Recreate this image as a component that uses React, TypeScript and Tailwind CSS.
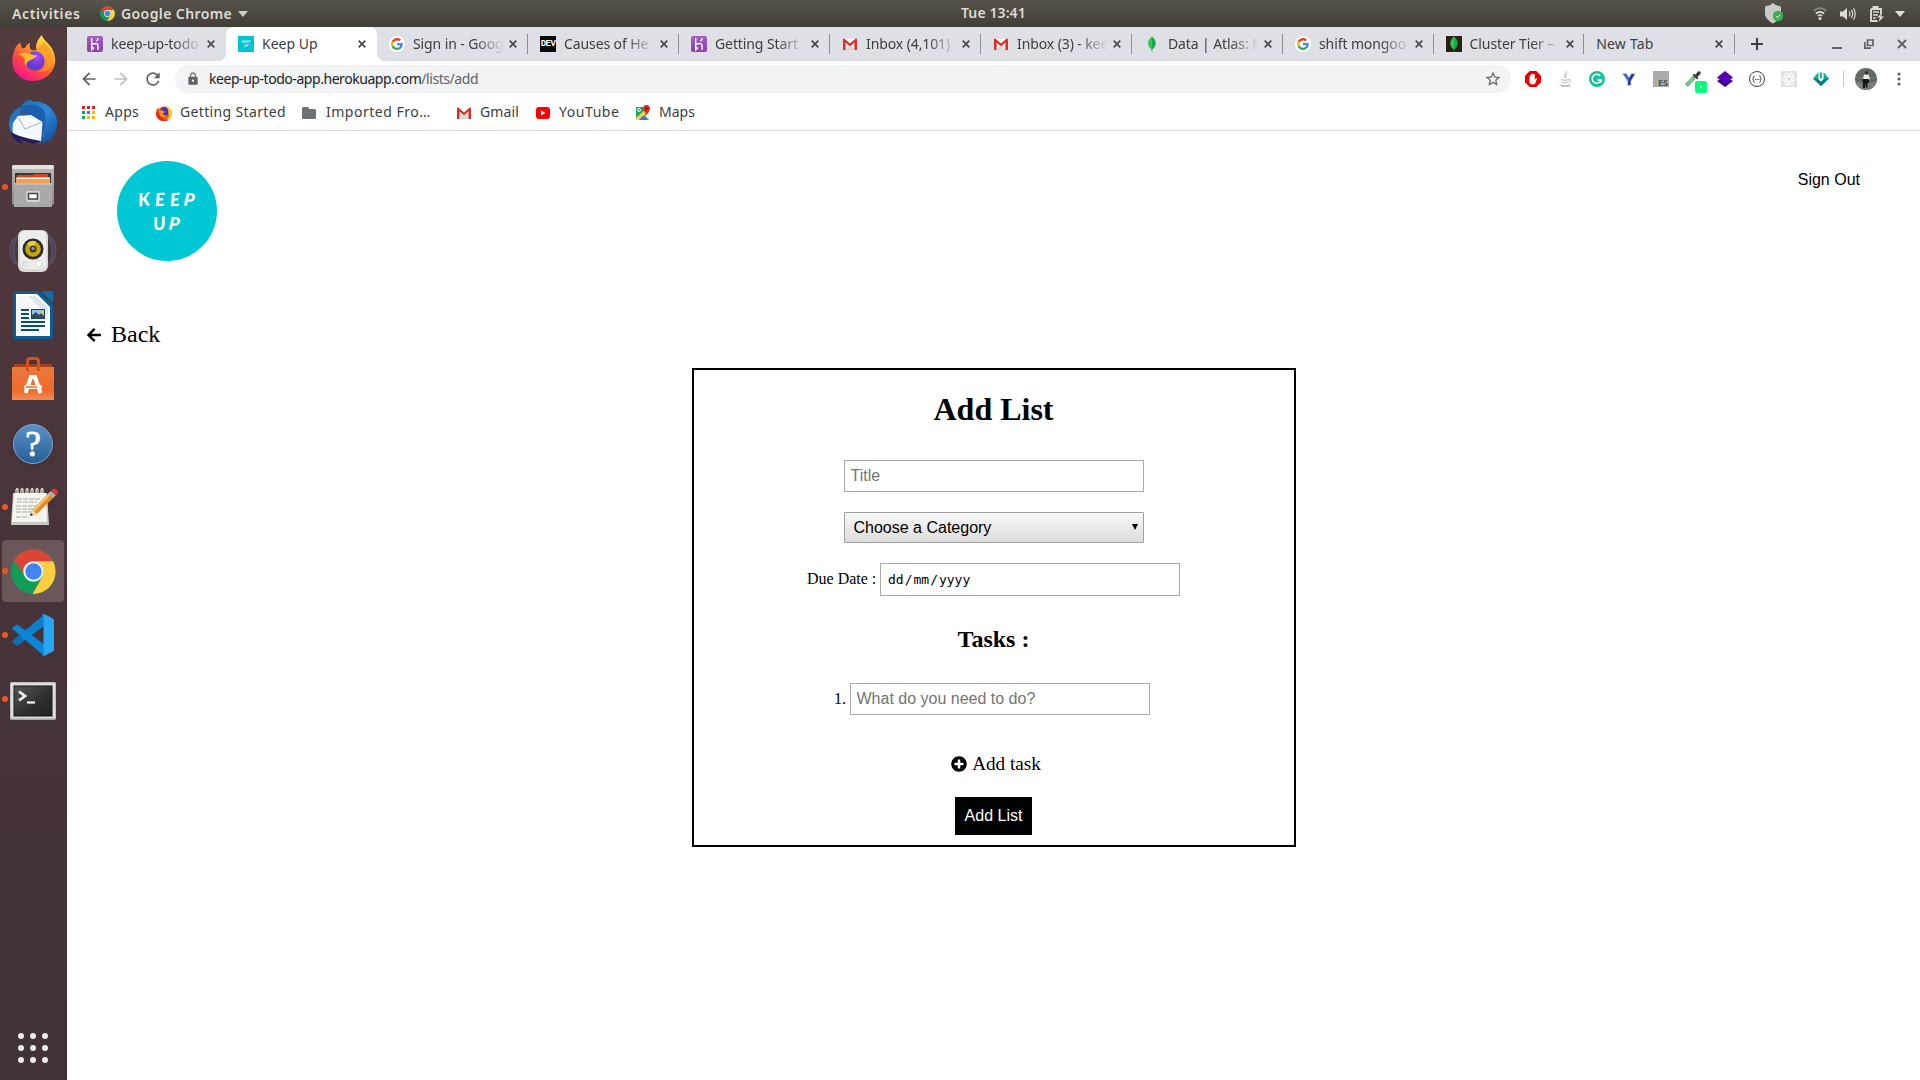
import React from "react";
import { FaArrowLeft, FaPlusCircle } from "react-icons/fa";
import { MdArrowBack, MdArrowForward, MdRefresh, MdLock, MdStarBorder } from "react-icons/md";

type P = { className?: string };

const Firefox = ({ className }: P) => (
  <svg viewBox="0 0 48 48" className={className}>
    <defs>
      <linearGradient id="ffBody" x1="0.85" y1="0.05" x2="0.25" y2="0.95">
        <stop offset="0" stopColor="#fff44f" />
        <stop offset="0.3" stopColor="#ffb02e" />
        <stop offset="0.62" stopColor="#ff5634" />
        <stop offset="1" stopColor="#f5148c" />
      </linearGradient>
      <radialGradient id="ffGlobe" cx="0.6" cy="0.3" r="0.8">
        <stop offset="0" stopColor="#a24cff" />
        <stop offset="0.6" stopColor="#6a3ad9" />
        <stop offset="1" stopColor="#3b4bc8" />
      </radialGradient>
    </defs>
    <path fill="url(#ffBody)" d="M3 18C4 13 7 9 10 8c0 3 1 5 2 6l3-1c1-3 3-4 5-5-1 3-1 6 2 8h5c-2-3-1-9 5-16 2 6 9 9 12 17 3 7 3 14-1 20-4 7-12 11-20 11C12 48 3 41 1.500 30 1 26 1.500 22 3 18z" />
    <circle cx="25" cy="27" r="10" fill="url(#ffGlobe)" />
    <path fill="#ffbd2e" d="M8 20c3-2 9-2 13 0 2 1 4 1 6 1-1 3-4 4-7 5-3 1-4 3-4 6-3-3-1-6-2-8-1-2-4-3-6-4z" />
    <path fill="#ff9a28" d="M28 15c6 0 10 5 10 11 0 6-5 11-11 12 9 2 17-5 17-14 0-8-6-13-10-17-2 3-4 6-6 8z" opacity="0.75" />
  </svg>
);

const FirefoxClassic = ({ className }: P) => (
  <svg viewBox="0 0 16 16" className={className}>
    <path fill="#f4601a" d="M1.500 2.500L3 4q1.500-2.500 5-2.500C12 1 16 4 16 8.500 16 13 12.500 16 8 16S0 13 0 8.500q0-3.500 1.500-6z" />
    <path fill="#e8260c" d="M0 8q0 5 4 7.200Q8 17 12 15q-4 0-6-2.500Q3 9 3.500 5z" />
    <path fill="#ffd21f" d="M10 .800q6 2.500 6 8 0 5-5 6.700 2.500-3 2-6.500-.5-4-3-8.200z" />
    <circle cx="8" cy="6.800" r="4.200" fill="#2b3fa8" />
    <path fill="#4b2fc0" d="M6 3q4-2 6 2v5q-3 2-5 0z" />
    <path fill="#f9921e" d="M3 5.500q2-1 4 .5l2 .5q-.5 1.500-2.500 2 .5 2 3.500 1.500-2 3-5.500 1.200Q2.500 9 3 5.500z" />
  </svg>
);

const Thunderbird = () => (
  <svg viewBox="0 0 48 48" className="size-12">
    <defs>
      <linearGradient id="tb" x1="0" y1="0" x2="1" y2="1">
        <stop offset="0" stopColor="#1d5fa8" />
        <stop offset="0.5" stopColor="#2a8ddb" />
        <stop offset="1" stopColor="#123f91" />
      </linearGradient>
    </defs>
    <path fill="#231d5e" d="M2 33c1 6 5 10 12 12l-4-5 14 5 8-3-8-9z" />
    <path fill="url(#tb)" d="M0 26C0 17 4 10 12 8c2-4 5-7 10-7l1 1.500c12-1 22 6 25 18 1 10-3 18-9 23l1-4-6 6 1-4.500-5 5 1.500-5L14 24 3 34C1 31 0 29 0 26z" />
    <path fill="#1b5fae" d="M12 8c9-4 18-3 23 4 3 6 1 16-1 22-1-6-3-11-7-13l-16-5z" />
    <path fill="#f7f8fa" d="M4 24l5-7 13-1 11.500 7L32 42C22 40 11 38 4 34q-1-5 0-10z" />
    <path fill="none" stroke="#b9bdc5" strokeWidth="1.200" d="M9 18l7 12 17-7" />
    <circle cx="14.500" cy="13.500" r="1.800" fill="#6b4b2a" />
  </svg>
);

const Files = () => (
  <svg viewBox="0 0 44 46" className="h-[46px] w-11">
    <defs>
      <linearGradient id="cab" x1="0" y1="0" x2="0" y2="1">
        <stop offset="0" stopColor="#b9b9b8" />
        <stop offset="1" stopColor="#8a8a89" />
      </linearGradient>
    </defs>
    <rect x="1" y="1" width="42" height="40" rx="2" fill="url(#cab)" />
    <rect x="1" y="1" width="42" height="4" rx="2" fill="#e3e3e2" />
    <rect x="4" y="9" width="36" height="11" fill="#3c3635" />
    <path fill="#d2491b" d="M6 11h16l1-1h14v10H6z" />
    <path fill="#f5a04c" d="M5 13h34v7H5z" />
    <path stroke="#fff" d="M6 14.500h32" />
    <path fill="#a9a9a8" d="M3 19h38v24H3z" />
    <path fill="#bdbdbc" d="M3 19h38v2H3z" />
    <rect x="15" y="27" width="14" height="11" rx="2" fill="#d4d4d3" />
    <rect x="17.500" y="29.500" width="9" height="5.500" fill="#fff" stroke="#424242" strokeWidth="1.500" />
  </svg>
);

const Rhythmbox = () => (
  <svg viewBox="0 0 48 46" className="h-[46px] w-12">
    <path d="M6 9c-6 8-6 19 0 27M42 9c6 8 6 19 0 27M9 7C3 18 3 28 9 38M39 7c6 11 6 21 0 31" fill="none" stroke="#5e76a6" strokeWidth="1.800" opacity="0.4" />
    <rect x="9" y="2" width="30" height="42" rx="6" fill="#d9d9d7" />
    <rect x="11" y="3" width="26" height="38" rx="5" fill="#ededec" />
    <circle cx="24" cy="21" r="10.500" fill="#2d2b2b" />
    <circle cx="24" cy="21" r="7.800" fill="#c8a40e" />
    <path d="M24 21L18 15.500a8 8 0 0 1 9-2z" fill="#ecd23c" />
    <circle cx="24" cy="21" r="3.500" fill="#3d3c3a" />
    <circle cx="24" cy="20.500" r="1.600" fill="#9a9a98" />
    <circle cx="30" cy="36" r="3.500" fill="#fff" stroke="#cfcfcd" />
    <rect x="14" y="34" width="4" height="4" fill="none" stroke="#d6d6d4" />
  </svg>
);

const Writer = () => (
  <svg viewBox="0 0 40 48" className="h-12 w-10">
    <path fill="#0c5d94" d="M2 0h24l14 14v32a2 2 0 0 1-2 2H2a2 2 0 0 1-2-2V2a2 2 0 0 1 2-2z" />
    <path fill="#0e6ba8" d="M28 0h12v12z" />
    <path fill="#fff" d="M3 3h21l13 13v29H3z" />
    <path fill="#dfe5e9" d="M5 5h18l12 12v26H5z" />
    <path fill="#f5f7f8" d="M5 43V5h10l20 20v18z" />
    <path stroke="#0c4c78" strokeWidth="2" d="M8 19h8M8 23h8M8 27h8M8 31h24M8 35h24M8 39h18" />
    <rect x="18.500" y="18.500" width="13" height="9" fill="#8fc7ea" stroke="#0c4c78" />
    <path fill="#3b4a52" d="M19 27v-3l4-3 3 3 2-2 3 3v2z" />
    <circle cx="29" cy="21" r="1.500" fill="#f0c23b" />
  </svg>
);

const Software = () => (
  <svg viewBox="0 0 42 44" className="h-11 w-[42px]">
    <defs>
      <linearGradient id="bag" x1="0" y1="0" x2="0" y2="1">
        <stop offset="0" stopColor="#e97a3c" />
        <stop offset="0.7" stopColor="#ee6a2c" />
        <stop offset="1" stopColor="#f38a52" />
      </linearGradient>
    </defs>
    <path fill="#a6401c" d="M2 7h38v5H2z" />
    <path fill="url(#bag)" d="M0 10h42v33H0z" />
    <path fill="none" stroke="#d4521d" strokeWidth="3" d="M15.500 14V4.500c0-1.500 1-3 3-3h5c2 0 3 1.500 3 3V14" />
    <path fill="none" stroke="#fff" strokeWidth="4" d="M13.500 36l5.500-16h4l5.500 16" />
    <rect x="12" y="28" width="18" height="4" rx="2" fill="#fff" />
    <rect x="14" y="29.300" width="11" height="1.500" fill="#ee6a2c" />
  </svg>
);

const Help = () => (
  <div className="mt-0.5 flex size-10 items-center justify-center rounded-full border border-[#7fa6cc] bg-linear-to-b from-[#5b91c9] to-[#265f95] font-['Liberation_Serif',serif] text-[35px] leading-none text-white shadow [-webkit-text-stroke:0.8px_white]">?</div>
);

const Gedit = () => (
  <svg viewBox="0 0 48 40" className="ml-0.5 h-10 w-12">
    <path fill="#c9c9c4" d="M3 6h34l2 32H1z" />
    <path fill="#f4f4f0" d="M4 6h32l1 29H2z" />
    <path d="M7 12h24M7 15h20M6 19h25M6 22h17M6 25h22M6 30h13" stroke="#a8a8a4" strokeDasharray="5 1" />
    <path d="M6 6V3q1.500-3 2 0v3M11 6V3q1.500-3 2 0v3M16 6V3q1.500-3 2 0v3M21 6V3q1.500-3 2 0v3M26 6V3q1.500-3 2 0v3M31 6V3q1.500-3 2 0v3" fill="none" stroke="#dededa" strokeWidth="1.300" />
    <path fill="#e8892c" d="M20 29l2-6L40 5l5 4-18 18z" />
    <path fill="#f8c16a" d="M22 23L40 5l2 1.500L24 25z" />
    <path fill="#f0d9b5" d="M20 29l2-6 5 4z" />
    <path fill="#222" d="M20 29l1-3 2 2z" />
    <path fill="#a9b1b5" d="M38 7l3-3 5 4-3 3z" />
    <path fill="#e0353b" d="M41 4c2-3 4-2.500 6-1s1 4-1 5z" />
  </svg>
);

const Chrome = ({ className }: P) => (
  <svg viewBox="0 0 48 48" className={className}>
    <circle cx="24" cy="24" r="24" fill="#0f9d58" />
    <path fill="#db4437" d="M3.200 12A24 24 0 0 1 44.800 13H24a11 11 0 0 0-10.500 14z" />
    <path fill="#ffcd40" d="M44.800 13A24 24 0 0 1 23 48l10.500-18.500A11 11 0 0 0 24 13z" />
    <circle cx="24" cy="24" r="11" fill="#f1f1f1" />
    <circle cx="24" cy="24" r="8.700" fill="#4285f4" />
  </svg>
);

const VSCode = () => (
  <svg viewBox="0 0 42 42" className="size-[42px]">
    <path fill="#0a7fd0" d="M0 27.500L4 31q1 .8 2.500-.2L32 12V.500z" />
    <path fill="#0b6fb5" d="M0 27.500L4 31q1 .8 2.500-.2L12 26.500 7 21z" />
    <path fill="#0a86d8" d="M0 14.500L4 11q1-.8 2.500.2L33 31l-2 10z" />
    <path fill="#2aa5f2" d="M30 .500Q31.500-.5 33 .500l8 4q1 .5 1 2v29q0 1.500-1 2l-8 4q-1.500.8-3-.5 1.500.5 1.500-2V3q0-2.500-1.500-2.500z" />
  </svg>
);

const Terminal = () => (
  <svg viewBox="0 0 46 38" className="mt-1 h-[38px] w-[46px]">
    <defs>
      <linearGradient id="term" x1="0" y1="0" x2="1" y2="1">
        <stop offset="0" stopColor="#555" />
        <stop offset="0.6" stopColor="#2d2d2d" />
        <stop offset="1" stopColor="#222" />
      </linearGradient>
    </defs>
    <rect width="46" height="38" rx="1.500" fill="#a4a4a2" />
    <rect x="0.500" y="0.500" width="45" height="36" rx="1" fill="#dcdcda" />
    <rect x="3.500" y="3.500" width="39" height="31" fill="#161616" />
    <rect x="4.500" y="4.500" width="37" height="29" fill="url(#term)" />
    <path d="M9 9.500l6 4.500-6 4.500" fill="none" stroke="#f4f4f4" strokeWidth="2.800" />
    <path d="M17 20.500h8" stroke="#f4f4f4" strokeWidth="2.200" />
  </svg>
);

const Launcher = () => {
  const apps: { el: React.ReactNode; run?: boolean; active?: boolean }[] = [
    { el: <Firefox className="mb-0.5 ml-px size-[46px]" /> },
    { el: <Thunderbird /> },
    { el: <Files />, run: true },
    { el: <Rhythmbox /> },
    { el: <Writer /> },
    { el: <Software /> },
    { el: <Help /> },
    { el: <Gedit />, run: true },
    { el: <Chrome className="size-[45px]" />, run: true, active: true },
    { el: <VSCode />, run: true },
    { el: <Terminal />, run: true },
  ];
  return (
    <aside className="flex w-[67px] shrink-0 flex-col bg-linear-to-b from-[#523a3d] via-[#47333a] to-[#3f3336]">
      {apps.map((a, i) => (
        <div key={i} className="flex h-16 items-center">
          <div className={a.active ? "ml-0.5 flex h-[62px] w-[62px] items-center rounded-[4px] bg-[#6b5659]" : "ml-0.5 flex h-[62px] w-[62px] items-center"}>
            <span className={a.run ? "size-1.5 shrink-0 rounded-full bg-[#e95420]" : "size-1.5 shrink-0"} />
            <span className="flex w-[50px] items-center justify-center [&>svg]:shrink-0">{a.el}</span>
          </div>
        </div>
      ))}
      <div className="mt-auto mb-[17px] ml-[18px] grid w-[30px] grid-cols-3 gap-1.5">
        {Array.from({ length: 9 }, (_, i) => (
          <span key={i} className="size-1.5 rounded-full bg-[#ececea]" />
        ))}
      </div>
    </aside>
  );
};

const TopBar = () => (
  <header className="flex h-[27px] shrink-0 items-center bg-linear-to-b from-[#57534a] to-[#403e38] font-['Noto_Sans',sans-serif] text-[14px] leading-none font-semibold text-[#dfdbd2]">
    <span className="ml-3 w-[68px] tracking-[0.6px] whitespace-nowrap">Activities</span>
    <Chrome className="ml-5 size-[15px]" />
    <span className="ml-1.5 w-[111px] tracking-[0.4px] whitespace-nowrap">Google Chrome</span>
    <svg viewBox="0 0 10 6" className="ml-1.5 h-1.5 w-2.5"><path d="M0 0h10L5 6z" fill="#cfccc4" /></svg>
    <span className="mb-0.5 ml-[713px] w-[68px] tracking-[0.1px] whitespace-nowrap">Tue 13:41</span>
    <div className="ml-auto flex h-full items-center pr-[15px]">
      <svg viewBox="0 0 18 21" className="mr-[30px] h-[21px] w-[18px]">
        <path fill="#c9cbca" d="M8 0q3 3 8 3.500v7c0 4-4 8-8 10-4-2-8-6-8-10v-7Q5 3 8 0z" />
        <circle cx="13" cy="13" r="5.200" fill="#35b34a" />
        <path d="M10.800 13l1.700 1.700 2.800-3" fill="none" stroke="#fff" />
      </svg>
      <svg viewBox="0 0 14 13" className="mr-[13px] h-[13px] w-3.5">
        <path d="M.8 3.800Q7-1.500 13.200 3.800" fill="none" stroke="#8b887f" strokeWidth="1.800" />
        <path d="M2.800 6.600Q7 3 11.200 6.600" fill="none" stroke="#dfdbd2" strokeWidth="1.700" />
        <path d="M4.800 9Q7 7 9.200 9" fill="none" stroke="#dfdbd2" strokeWidth="1.500" />
        <circle cx="7" cy="11.500" r="1.500" fill="#dfdbd2" />
      </svg>
      <svg viewBox="0 0 16 14" className="mr-3.5 h-3.5 w-4">
        <path fill="#dfdbd2" d="M0 4.500h3L7 1v12L3 9.500H0z" />
        <path d="M9 4.500q1.800 2.500 0 5M11.300 2.800q2.800 4.200 0 8.400M13.500 1.200q3.500 5.800 0 11.600" fill="none" stroke="#dfdbd2" strokeWidth="1.200" />
      </svg>
      <svg viewBox="0 0 14 16" className="mr-[11px] h-4 w-3.5">
        <path d="M3.500 3V1h4v2M1 3h10v5M7.500 15H1V3" fill="none" stroke="#dfdbd2" strokeWidth="1.900" />
        <path d="M3 6h6M3 9h5M3 12h3" stroke="#dfdbd2" strokeWidth="1.600" />
        <path fill="#dfdbd2" d="M12 7l-5 4.500h3l-1.500 4.500L14 10.500h-3z" />
      </svg>
      <svg viewBox="0 0 10 6" className="h-1.5 w-2.5"><path d="M0 0h10L5 6z" fill="#dfdbd2" /></svg>
    </div>
  </header>
);

const Heroku = () => (
  <span className="flex size-4 items-center justify-center rounded-[2px] bg-linear-to-b from-[#a45fc4] to-[#8a3fae] text-white">
    <svg viewBox="0 0 16 16" className="size-4"><path d="M4.700 2v6.700q6.300-2.700 6.300 1V14M11 2q0 2-1.500 3.300M4.700 10.500V14l1.800-1.700z" fill="none" stroke="#fff" strokeWidth="1.400" /></svg>
  </span>
);
const Google = () => (
  <span className="flex size-4 items-center justify-center rounded-full bg-white">
    <svg viewBox="0 0 48 48" className="size-3">
      <path fill="#ea4335" d="M24 9.500c3.500 0 6.700 1.200 9.200 3.600l6.900-6.900C35.900 2.400 30.500 0 24 0 14.600 0 6.500 5.400 2.600 13.200l8 6.200C12.400 13.700 17.700 9.500 24 9.500z" />
      <path fill="#4285f4" d="M47 24.500c0-1.600-.2-3.100-.4-4.500H24v9h12.900c-.6 3-2.300 5.500-4.800 7.200l7.700 6C44.400 38 47 31.800 47 24.500z" />
      <path fill="#fbbc05" d="M10.500 28.600A14.500 14.500 0 0 1 10.500 19.400l-8-6.200a24 24 0 0 0 0 21.600z" />
      <path fill="#34a853" d="M24 48c6.500 0 11.900-2.100 15.900-5.800l-7.700-6c-2.200 1.500-4.900 2.300-8.200 2.300-6.300 0-11.600-4.200-13.500-9.900l-8 6.200C6.500 42.600 14.600 48 24 48z" />
    </svg>
  </span>
);
const GmailM = () => (
  <svg viewBox="0 0 16 16" className="size-4">
    <path fill="#e9e9e9" d="M1 3h14v11H1z" />
    <path fill="#fff" d="M3 3h10L8 8z" />
    <path fill="#c9c9c9" d="M3 14l5-5 5 5z" opacity=".5" />
    <path fill="#d93025" d="M1 14V3.500Q1 2.300 2.200 2.500L8 7.500l5.800-5q1.200-.2 1.200 1V14h-2.500V6.500L8 10.200 3.500 6.500V14z" />
  </svg>
);
const Leaf = () => (
  <svg viewBox="0 0 16 16" className="size-4"><path fill="#13aa52" d="M8 .5c5 4.500 5 9 .3 13V16h-.6v-2.500C3 9.500 3 5 8 .500z" /><path fill="#3fc43a" d="M8 .5v13C4 9.500 3.500 5 8 .500z" /></svg>
);

const Favicon = ({ kind }: { kind: string }) => {
  if (kind === "heroku") return <Heroku />;
  if (kind === "google") return <Google />;
  if (kind === "gmail") return <GmailM />;
  if (kind === "leaf") return <Leaf />;
  if (kind === "keep")
    return (
      <span className="flex size-4 flex-col items-center justify-center bg-[#00c4d4] font-['Lato',sans-serif] text-[3.500px] leading-1 text-white">
        <span>KEEP</span>
        <span>UP</span>
      </span>
    );
  if (kind === "dev")
    return (
      <span className="flex size-4 items-center justify-center bg-[#0a0a0a] font-['Liberation_Mono',monospace] text-[9px] leading-none font-bold tracking-[-0.5px] text-white">DEV</span>
    );
  return (
    <span className="flex size-4 bg-[#2e1f15]"><Leaf /></span>
  );
};

const Close = ({ className }: P) => (
  <svg viewBox="0 0 8 8" className={className}><path d="M.7.7l6.600 6.600M7.300.7L.7 7.300" stroke="#45484c" strokeWidth="1.700" /></svg>
);

const tabs = [
  { icon: "heroku", title: "keep-up-todo" },
  { icon: "keep", title: "Keep Up" },
  { icon: "google", title: "Sign in - Goog" },
  { icon: "dev", title: "Causes of He" },
  { icon: "heroku", title: "Getting Start" },
  { icon: "gmail", title: "Inbox (4,101)" },
  { icon: "gmail", title: "Inbox (3) - kee" },
  { icon: "leaf", title: "Data | Atlas: M" },
  { icon: "google", title: "shift mongoo" },
  { icon: "mongo", title: "Cluster Tier –" },
  { icon: "", title: "New Tab" },
];

const TabStrip = () => (
  <div className="flex h-[34px] shrink-0 items-center bg-[#dee0e6] pl-2 font-['Noto_Sans',sans-serif] text-[14px] text-[#3c4043]">
    {tabs.map((t, i) => {
      const active = i === 1;
      return (
        <div
          key={i}
          className={
            active
              ? "relative flex h-full w-[151px] shrink-0 items-center rounded-t-[8px] bg-white pl-3 before:absolute before:bottom-0 before:-left-2 before:size-2 before:bg-[radial-gradient(circle_at_0_0,transparent_8px,white_8.5px)] after:absolute after:-right-2 after:bottom-0 after:size-2 after:bg-[radial-gradient(circle_at_100%_0,transparent_8px,white_8.5px)]"
              : i > 7
                ? "flex h-full w-[150.6px] shrink-0 items-center pl-3"
                : "flex h-full w-[151px] shrink-0 items-center pl-3"
          }
        >
          {t.icon && <span className="mr-2 shrink-0"><Favicon kind={t.icon} /></span>}
          <span
            className={
              t.icon && !active
                ? "mr-[-4px] w-[92px] shrink-0 leading-5 tracking-[-0.1px] whitespace-nowrap [mask-image:linear-gradient(to_right,black_62px,transparent_91px)]"
                : active
                  ? "w-[88px] shrink-0 leading-5 whitespace-nowrap"
                  : "w-[111px] shrink-0 leading-5 tracking-[0.2px] whitespace-nowrap"
            }
          >
            {t.title}
          </span>
          <Close className="ml-2 size-2 shrink-0" />
          <span className={i > 1 ? "ml-auto h-5 w-px bg-[#8b8e93]" : "hidden"} />
        </div>
      );
    })}
    <svg viewBox="0 0 12 12" className="ml-4 size-3"><path d="M6 0v12M0 6h12" stroke="#3c4043" strokeWidth="2" /></svg>
    <div className="ml-auto flex items-center pr-[13px]">
      <svg viewBox="0 0 10 10" className="mr-[22px] size-2.5"><path d="M0 9h10" stroke="#5f6368" strokeWidth="2" /></svg>
      <svg viewBox="0 0 10 10" className="mr-[23px] size-2.5"><path d="M3.500 1H9v5.500H3.500zM.8 3v6.200H7" fill="none" stroke="#5f6368" strokeWidth="1.700" /></svg>
      <svg viewBox="0 0 10 10" className="size-2.5"><path d="M1 1l8 8M9 1L1 9" stroke="#5f6368" strokeWidth="1.900" /></svg>
    </div>
  </div>
);

const extensions: React.ReactNode[] = [
  <svg viewBox="0 0 16 16" className="size-4"><path fill="#e60000" d="M4.700 0h6.600L16 4.700v6.600L11.300 16H4.700L0 11.300V4.700z" /><path fill="#fff" d="M4.500 8V5q.7-.8 1.300 0v2.500V3.500q.7-.8 1.300 0V7 3q.8-.8 1.400 0v4-3.500q.7-.7 1.300 0V9l1-1.500q1-.5 1.200.3L10.500 12q-1 1.500-3 1.500-3 0-3-3z" /></svg>,
  <svg viewBox="0 0 16 16" className="size-4" fill="none" stroke="#b5b5b5"><path d="M8.500 0c2 2.500-3 3.500-.5 7M10.500 3c-3 1.500-1.500 2.500-1.200 4M4 8.500c2 1 6 1 7.500 0M4.500 11c2 1 5 1 6.500 0M12 8.500c2-.5 2 2-.5 2.800M2.500 13.500c3 1.800 8 1.600 10.500 0M4 15.300c3 .7 7 .5 9.500-.3" /></svg>,
  <svg viewBox="0 0 16 16" className="size-4"><circle cx="8" cy="8" r="8" fill="#15c39a" /><path d="M11.300 5A4.500 4.500 0 1 0 12 9H8.500M12 9v2.500" fill="none" stroke="#fff" strokeWidth="1.500" /></svg>,
  <svg viewBox="0 0 16 16" className="size-4"><path fill="#1c3a9e" stroke="#dcdcdc" strokeWidth=".8" d="M1.500 2.500h4L8 6.500l2.500-4h4L10 10v4.500H6.500V10z" /><path fill="#4f86f2" d="M3 3.300h2L8 8.500v2z" /></svg>,
  <span className="flex size-4 items-end justify-end bg-[#ababab] pr-px font-['Noto_Sans',sans-serif] text-[9px] leading-[9px] font-bold text-[#555]">ES</span>,
  <span className="relative size-4">
    <svg viewBox="0 0 16 16" className="size-4"><path d="M1.500 14.500L9.500 6" stroke="#777" strokeWidth="3.500" /><path d="M2 14l7-7.500" stroke="#5fe38c" strokeWidth="2" /><path fill="#3b3b3b" d="M7.500 4l1.300-1.300 1.500 1L13 .5q2-.8 2.500.6.500 1.300-.5 2.400L12.500 6l1 1.300-1.300 1.300z" /></svg>
    <span className="absolute top-2.5 left-2.5 flex size-3 items-center justify-center rounded-[2px] bg-[#00ff7b]"><span className="size-0.5 bg-white" /></span>
  </span>,
  <svg viewBox="0 0 16 16" className="size-4"><path fill="#38008a" d="M0 10l8-5 8 5-8 6z" /><path fill="#5a00b4" d="M0 6.500L8 0l8 6.500-8 6z" /></svg>,
  <svg viewBox="0 0 16 16" className="size-4" fill="none" stroke="#444"><circle cx="8" cy="8" r="7.500" /><path d="M5.700 4.800q-1.200 0-1.200 1.500T3.600 8q.9 0 .9 1.700t1.200 1.500M10.300 4.800q1.200 0 1.200 1.500t.9 1.700q-.9 0-.9 1.700t-1.200 1.500M6 8.500h1M7.700 8.500h1M9.300 8.500h1" /></svg>,
  <svg viewBox="0 0 16 16" className="size-4" fill="none" stroke="#fff"><path fill="#e2e2e2" stroke="none" d="M0 0h16v16H0z" /><ellipse cx="8" cy="8" rx="6.500" ry="2.500" /><ellipse cx="8" cy="8" rx="6.500" ry="2.500" transform="rotate(60 8 8)" /><ellipse cx="8" cy="8" rx="6.500" ry="2.500" transform="rotate(120 8 8)" /></svg>,
  <svg viewBox="0 0 16 16" className="size-4"><path fill="#12b48c" d="M0 7.500L5.500 1v7.500L8 10.500l2.500-2V1L16 7.500 8 15z" /><path fill="#0b7f78" d="M0 7.500h4L8 11l4-3.500h4L8 15z" /><path fill="#12b48c" d="M7 2l1-1 1 1v5.500H7z" /></svg>,
];

const Toolbar = () => (
  <div className="flex h-9 shrink-0 items-center bg-white text-[#5f6368]">
    <MdArrowBack className="ml-3 size-5" />
    <MdArrowForward className="ml-3 size-5 text-[#bdc1c6]" />
    <MdRefresh className="ml-3 size-5" />
    <div className="ml-3 flex h-7 w-[1336px] items-center rounded-full bg-[#f1f3f4] font-['Noto_Sans',sans-serif] text-[14px]">
      <MdLock className="ml-[11px] size-3.5" />
      <span className="ml-[9px] leading-5 tracking-[-0.45px] whitespace-nowrap">
        <span className="text-[#202124]">keep-up-todo-app.herokuapp.com</span>/lists/add
      </span>
      <MdStarBorder className="mr-[9px] ml-auto size-[18px]" />
    </div>
    <div className="ml-3.5 flex gap-4">
      {extensions.map((e, i) => (
        <span key={i} className="flex size-4">{e}</span>
      ))}
    </div>
    <span className="ml-3.5 h-4 w-px bg-[#c4c6ca]" />
    <svg viewBox="0 0 22 22" className="ml-[11px] size-[22px]">
      <defs><clipPath id="av"><circle cx="11" cy="11" r="11" /></clipPath></defs>
      <g clipPath="url(#av)">
        <path fill="#5f6a61" d="M0 0h22v22H0z" />
        <path fill="#7a7d79" d="M0 14h22v8H0z" />
        <path fill="#8a8c88" d="M0 9h22v1H0zM0 17h22v1H0z" opacity=".5" />
        <path fill="#e4e6ea" d="M9 6.500h4.500l1.500 5H8z" />
        <circle cx="11.500" cy="4.800" r="1.700" fill="#3a2a22" />
        <path fill="#16161a" d="M7.500 11h6l1 3.500-2 .5v4l-1.500 1v-5l-1 5H8z" />
      </g>
    </svg>
    <svg viewBox="0 0 4 14" className="ml-5 h-3.5 w-1" fill="#5f6368"><circle cx="2" cy="2" r="1.600" /><circle cx="2" cy="7" r="1.600" /><circle cx="2" cy="12" r="1.600" /></svg>
  </div>
);

const BookmarksBar = () => (
  <div className="flex h-[34px] shrink-0 items-center border-b border-[#d9dae0] bg-white pb-0.5 font-['Noto_Sans',sans-serif] text-[14px] leading-5 whitespace-nowrap text-[#3c4043]">
    <svg viewBox="0 0 13 13" className="mb-px ml-[15px] size-[13px]">
      <path fill="#ea1d1d" d="M0 0h3v3H0zM5 0h3v3H5zM10 0h3v3h-3z" />
      <path fill="#0fa958" d="M0 5h3v3H0zM0 10h3v3H0z" />
      <path fill="#2f7df6" d="M5 5h3v3H5z" />
      <path fill="#f9b90b" d="M10 5h3v3h-3zM5 10h3v3H5zM10 10h3v3h-3z" />
    </svg>
    <span className="mb-px ml-2.5 w-[35px] tracking-[0.3px]">Apps</span>
    <FirefoxClassic className="ml-4 size-4" />
    <span className="mb-px ml-2 w-[106px] tracking-[0.35px]">Getting Started</span>
    <svg viewBox="0 0 14 12" className="ml-4 h-3 w-3.5"><path fill="#6e7175" d="M1.500 0H6l1.500 2h5Q14 2 14 3.500v7q0 1.500-1.500 1.500h-11Q0 12 0 10.500v-9Q0 0 1.500 0z" /></svg>
    <span className="mb-px ml-2.5 w-[106px] tracking-[0.5px]">Imported Fro…</span>
    <span className="ml-6"><GmailM /></span>
    <span className="mb-px ml-2 w-[39px] tracking-[0.15px]">Gmail</span>
    <svg viewBox="0 0 16 14" className="ml-4 h-3.5 w-4"><rect x="1" y="1" width="14" height="12" rx="3" fill="#f00" /><path fill="#fff" d="M6 4.500v5L10.500 7z" /></svg>
    <span className="mb-px ml-2 w-[61px] tracking-[0.55px]">YouTube</span>
    <svg viewBox="0 0 16 16" className="ml-[15px] size-4">
      <path fill="#1fa463" d="M1 2h13v13H1z" />
      <path fill="#fbd34b" d="M1 13L12 3l2 2-9 10H1z" />
      <path fill="#5a63e8" d="M4 15l4-4.500 4 4.500z" />
      <path fill="#e8e8e8" d="M10 11l4-4v8z" />
      <circle cx="4" cy="5" r="1.500" fill="none" stroke="#fff" />
      <path fill="#e8281c" d="M11.500 0a3.500 3.500 0 0 1 3.500 3.500c0 2.500-3 3.500-3.500 7-.5-3.500-3.500-4.500-3.500-7A3.500 3.500 0 0 1 11.500 0z" />
      <circle cx="11.500" cy="3.500" r="1.200" fill="#7c120c" />
    </svg>
    <span className="mb-px ml-2">Maps</span>
  </div>
);

const LogoText = () => (
  <div className="flex size-[100px] flex-col items-center justify-center rounded-full bg-[#00c7d4] pr-px font-['Lato',sans-serif] text-[18px] leading-6 font-black text-white italic">
    <div className="flex gap-[5px]">
      <span className="-rotate-6">K</span>
      <span className="-rotate-3">E</span>
      <span className="-rotate-3">E</span>
      <span className="rotate-6">P</span>
    </div>
    <div className="flex gap-[4px]">
      <span className="-rotate-6">U</span>
      <span className="rotate-6">P</span>
    </div>
  </div>
);

const AddListForm = () => (
  <form className="flex h-[479px] w-[604px] flex-col items-center border-2 border-black pt-[21px] text-base">
    <h1 className="mr-px text-[32px] leading-[37px] font-bold">Add List</h1>
    <input
      placeholder="Title"
      className="mt-8 h-8 w-[300px] border border-[#a9a9a9] px-[5.5px] font-['Liberation_Sans',sans-serif] placeholder:text-[#757575]"
    />
    <div className="mt-5 flex h-[31px] w-[300px] items-center justify-between rounded-[1px] border border-[#a0a0a0] bg-linear-to-b from-[#f8f8f8] to-[#dddddd] pr-[5px] pl-[8.5px] font-['Liberation_Sans',sans-serif]">
      Choose a Category
      <svg viewBox="0 0 6 6" className="mb-0.5 size-1.5"><path d="M0 0h6L3 6z" /></svg>
    </div>
    <div className="mt-5 mr-px flex h-[33px] items-center">
      <label className="mb-px w-[73px] leading-[18px] whitespace-nowrap">Due Date :</label>
      <div className="flex h-full w-[300px] items-center border border-[#a9a9a9] pl-1.5 font-['DejaVu_Sans_Mono',monospace] text-[13px]">
        <span className="px-px">dd</span>/<span className="px-px">mm</span>/<span className="px-px">yyyy</span>
      </div>
    </div>
    <h2 className="mt-[29px] mr-px text-[24px] leading-7 font-bold">Tasks :</h2>
    <div className="mt-[30px] mr-[5px] flex h-8 items-center">
      <span className="w-[17px] pl-px">1.</span>
      <input
        placeholder="What do you need to do?"
        className="h-8 w-[300px] border border-[#a9a9a9] px-[5.5px] font-['Liberation_Sans',sans-serif] placeholder:text-[#757575]"
      />
    </div>
    <div className="mt-[38px] ml-1 flex items-center text-[19.2px] leading-[22px]">
      <FaPlusCircle className="mr-[5px] size-4" />
      Add task
    </div>
    <div className="mt-[22px] mr-px flex h-[38px] w-[77px] items-center justify-center bg-black font-['Liberation_Sans',sans-serif] text-white">Add List</div>
  </form>
);

export default function App() {
  return (
    <div className="flex h-[1080px] w-[1920px] flex-col overflow-hidden bg-white">
      <TopBar />
      <div className="flex min-h-0 flex-1">
        <Launcher />
        <div className="flex min-w-0 flex-1 flex-col">
          <TabStrip />
          <Toolbar />
          <BookmarksBar />
          <main className="flex flex-1 flex-col font-['Liberation_Serif',serif] text-black">
            <nav className="flex items-start justify-between pt-[30px] pr-[60px] pl-[50px]">
              <LogoText />
              <span className="mt-2.5 font-['Liberation_Sans',sans-serif] text-base leading-[18px]">Sign Out</span>
            </nav>
            <div className="mt-[59px] ml-[19px] flex items-center text-[24px] leading-7">
              <FaArrowLeft className="mt-0.5 size-4" />
              <span className="ml-[9px]">Back</span>
            </div>
            <div className="mt-5 ml-[625px]">
              <AddListForm />
            </div>
          </main>
        </div>
      </div>
    </div>
  );
}
